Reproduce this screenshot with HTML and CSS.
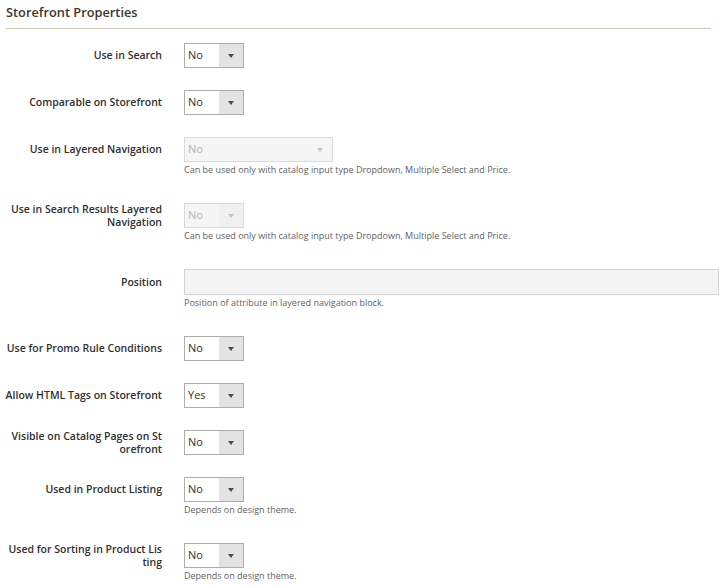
FILE: index.html
```html
<!DOCTYPE html>
<html lang="en">
<head>
    <meta charset="UTF-8">
    <title>Storefront Properties</title>
    <link rel="stylesheet" href="styles.css">
</head>
<body>
<div class="page">
    <div class="section-title">Storefront Properties</div>
    <div class="fields">
        <div class="field">
            <div class="label"><span>Use in Search</span></div>
            <div class="control">
                <div class="select"><span class="value">No</span><span class="btn"></span></div>
            </div>
        </div>
        <div class="field">
            <div class="label"><span>Comparable on Storefront</span></div>
            <div class="control">
                <div class="select"><span class="value">No</span><span class="btn"></span></div>
            </div>
        </div>
        <div class="field">
            <div class="label"><span>Use in Layered Navigation</span></div>
            <div class="control">
                <div class="select select-wide disabled"><span class="value">No</span><span class="btn"></span></div>
                <div class="note">Can be used only with catalog input type Dropdown, Multiple Select and Price.</div>
            </div>
        </div>
        <div class="field">
            <div class="label"><span>Use in Search Results Layered<br>Navigation</span></div>
            <div class="control">
                <div class="select disabled"><span class="value">No</span><span class="btn"></span></div>
                <div class="note">Can be used only with catalog input type Dropdown, Multiple Select and Price.</div>
            </div>
        </div>
        <div class="field">
            <div class="label label-tall"><span>Position</span></div>
            <div class="control">
                <div class="input"></div>
                <div class="note">Position of attribute in layered navigation block.</div>
            </div>
        </div>
        <div class="field">
            <div class="label"><span>Use for Promo Rule Conditions</span></div>
            <div class="control">
                <div class="select"><span class="value">No</span><span class="btn"></span></div>
            </div>
        </div>
        <div class="field">
            <div class="label"><span>Allow HTML Tags on Storefront</span></div>
            <div class="control">
                <div class="select"><span class="value">Yes</span><span class="btn"></span></div>
            </div>
        </div>
        <div class="field">
            <div class="label"><span>Visible on Catalog Pages on St<br>orefront</span></div>
            <div class="control">
                <div class="select"><span class="value">No</span><span class="btn"></span></div>
            </div>
        </div>
        <div class="field">
            <div class="label"><span>Used in Product Listing</span></div>
            <div class="control">
                <div class="select"><span class="value">No</span><span class="btn"></span></div>
                <div class="note">Depends on design theme.</div>
            </div>
        </div>
        <div class="field">
            <div class="label"><span>Used for Sorting in Product Lis<br>ting</span></div>
            <div class="control">
                <div class="select"><span class="value">No</span><span class="btn"></span></div>
                <div class="note">Depends on design theme.</div>
            </div>
        </div>
    </div>
</div>
</body>
</html>
```

FILE: styles.css
```css
*, ::before, ::after {
    box-sizing: border-box;
}

body {
    margin: 0;
    background: #fff;
    font-family: "Open Sans", "Liberation Sans", sans-serif;
    color: #303030;
}

.page {
    padding-left: 6px;
    height: 587px;
    overflow: hidden;
}

.section-title {
    width: 705px;
    padding-top: 2px;
    padding-bottom: 6px;
    line-height: 20px;
    font-size: 12.8px;
    font-weight: 600;
    color: #41362f;
    border-bottom: 1px solid #cdc6b9;
}

.fields {
    padding-top: 14px;
}

.field {
    display: flex;
    align-items: flex-start;
    margin-bottom: 22px;
}

.label {
    display: flex;
    align-items: center;
    justify-content: flex-end;
    width: 156px;
    height: 25px;
    padding-top: 1px;
    margin-right: 22px;
    text-align: right;
    font-size: 10.5px;
    font-weight: 600;
    line-height: 13.5px;
    white-space: nowrap;
}

.label-tall {
    height: 26px;
}

.select {
    display: flex;
    width: 60px;
    height: 25px;
    border: 1px solid #adadad;
    background: #fff;
    font-size: 11px;
    color: #303030;
}

.select .value {
    flex: 1;
    padding-left: 3px;
    line-height: 22px;
}

.select .btn {
    position: relative;
    width: 24px;
    background: #e3e3e3;
}

.select .btn::after {
    content: "";
    position: absolute;
    left: 9px;
    top: 10px;
    border-left: 3px solid transparent;
    border-right: 3px solid transparent;
    border-top: 4px solid #514943;
}

.select-wide {
    width: 149px;
}

.select.disabled {
    border-color: #dadada;
    background: #f5f5f5;
    color: #b4b4b4;
}

.select.disabled .btn {
    background: #f0f0f0;
}

.select-wide.disabled .btn {
    background: #f5f5f5;
}

.select.disabled .btn::after {
    border-top-color: #c2c2c2;
}

.input {
    width: 535px;
    height: 26px;
    border: 1px solid #d3d3d3;
    background: #f4f4f4;
}

.note {
    padding-bottom: 4px;
    font-size: 9px;
    line-height: 15px;
    color: #5f5f5f;
}
```
